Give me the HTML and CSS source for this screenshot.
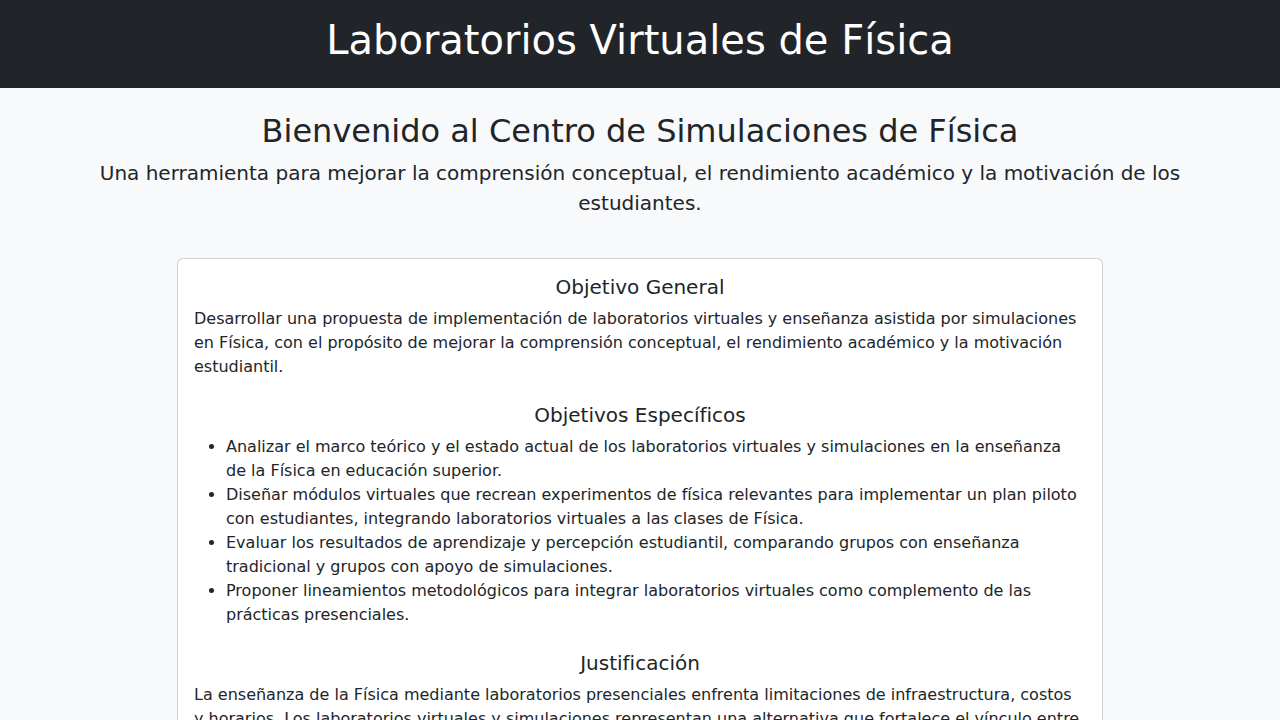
FILE: index.html
```html
<!DOCTYPE html>
<html lang="es">
<head>
<meta charset="utf-8">
<title>Laboratorios Virtuales de Física</title>
<link rel="stylesheet" href="styles.css">
</head>
<body>
<header class="site-header">
  <h1 class="site-title">Laboratorios Virtuales de Física</h1>
</header>
<main class="container">
  <section class="intro">
    <h2 class="intro-title">Bienvenido al Centro de Simulaciones de Física</h2>
    <p class="lead">Una herramienta para mejorar la comprensión conceptual, el rendimiento académico y la motivación de los estudiantes.</p>
  </section>
  <div class="card">
    <div class="card-body">
      <h5 class="card-heading first">Objetivo General</h5>
      <p class="text">Desarrollar una propuesta de implementación de laboratorios virtuales y enseñanza asistida por simulaciones en Física, con el propósito de mejorar la comprensión conceptual, el rendimiento académico y la motivación estudiantil.</p>

      <h5 class="card-heading">Objetivos Específicos</h5>
      <ul class="list">
        <li>Analizar el marco teórico y el estado actual de los laboratorios virtuales y simulaciones en la enseñanza de la Física en educación superior.</li>
        <li>Diseñar módulos virtuales que recrean experimentos de física relevantes para implementar un plan piloto con estudiantes, integrando laboratorios virtuales a las clases de Física.</li>
        <li>Evaluar los resultados de aprendizaje y percepción estudiantil, comparando grupos con enseñanza tradicional y grupos con apoyo de simulaciones.</li>
        <li>Proponer lineamientos metodológicos para integrar laboratorios virtuales como complemento de las prácticas presenciales.</li>
      </ul>

      <h5 class="card-heading">Justificación</h5>
      <p class="text">La enseñanza de la Física mediante laboratorios presenciales enfrenta limitaciones de infraestructura, costos y horarios. Los laboratorios virtuales y simulaciones representan una alternativa que fortalece el vínculo entre la teoría y la práctica, permitiendo a los estudiantes experimentar, repetir y analizar fenómenos físicos de forma segura y accesible.</p>
    </div>
  </div>
</main>
</body>
</html>
```

FILE: styles.css
```css
* { box-sizing: border-box; }

html, body {
  margin: 0;
  padding: 0;
}

body {
  font-family: "DejaVu Sans", "Liberation Sans", sans-serif;
  font-size: 16px;
  line-height: 1.5;
  color: #212529;
  background: #f8f9fa;
}

.site-header {
  background: #212529;
  color: #fff;
  text-align: center;
  padding: 16px 16px 24px;
}

.site-title {
  margin: 0;
  font-size: 40px;
  font-weight: 400;
  line-height: 1.2;
}

.container {
  max-width: 1140px;
  margin: 0 auto;
  padding: 24px 12px;
}

.intro {
  text-align: center;
  margin-bottom: 40px;
}

.intro-title {
  margin: 0 0 8px;
  font-size: 32px;
  font-weight: 400;
  line-height: 1.2;
}

.lead {
  margin: 0;
  font-size: 20px;
  font-weight: 400;
  line-height: 1.5;
}

.card {
  width: 926px;
  margin: 0 auto;
  background: #fff;
  border: 1px solid rgba(0, 0, 0, 0.175);
  border-radius: 6px;
}

.card-body {
  padding: 16px;
}

.card-heading {
  margin: 24px 0 8px;
  font-size: 20px;
  font-weight: 400;
  line-height: 1.2;
  text-align: center;
}

.card-heading.first {
  margin-top: 0;
}

.text {
  margin: 0 0 16px;
}

.list {
  margin: 0 0 16px;
  padding-left: 32px;
}
```
